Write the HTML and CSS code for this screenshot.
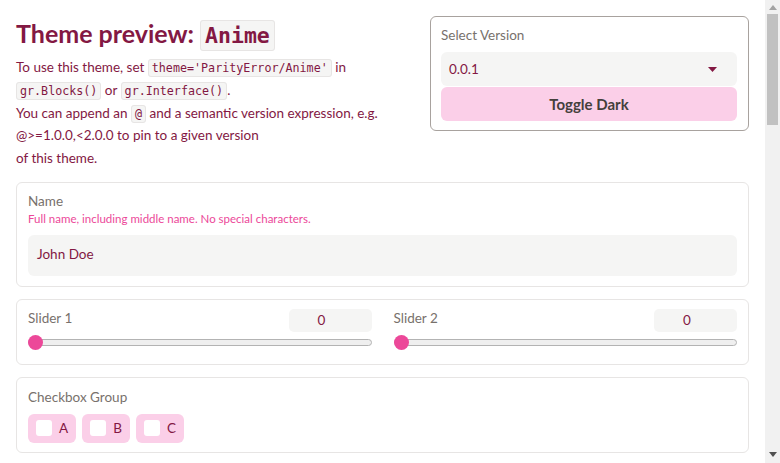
FILE: index.html
```html
<!DOCTYPE html>
<html lang="en">
<head>
<meta charset="utf-8">
<title>Theme preview: Anime</title>
<link rel="stylesheet" href="styles.css">
</head>
<body>
<div class="viewport">
<div class="app">
  <div class="top-row">
    <div class="intro">
      <h1 class="title">Theme preview: <code class="title-code">Anime</code></h1>
      <p class="desc">To use this theme, set <code class="ic">theme='ParityError/Anime'</code> in<br><code class="ic">gr.Blocks()</code> or <code class="ic">gr.Interface()</code>.<br>You can append an <code class="ic">@</code> and a semantic version expression, e.g.<br>@&gt;=1.0.0,&lt;2.0.0 to pin to a given version<br>of this theme.</p>
    </div>
    <div class="version-box">
      <div class="label">Select Version</div>
      <div class="dropdown">
        <span class="dd-value">0.0.1</span>
        <svg class="dd-arrow" width="9" height="5" viewBox="0 0 9 5"><path d="M0 0H9L4.5 5Z" fill="#831843"/></svg>
      </div>
      <button class="toggle">Toggle Dark</button>
    </div>
  </div>

  <div class="block name-block">
    <div class="label">Name</div>
    <div class="info">Full name, including middle name. No special characters.</div>
    <div class="input">John Doe</div>
  </div>

  <div class="block slider-block">
    <div class="slider">
      <div class="slider-head">
        <span class="label">Slider 1</span>
        <span class="num">0</span>
      </div>
      <div class="track-wrap"><div class="track"></div><div class="thumb"></div></div>
    </div>
    <div class="slider">
      <div class="slider-head">
        <span class="label">Slider 2</span>
        <span class="num">0</span>
      </div>
      <div class="track-wrap"><div class="track"></div><div class="thumb"></div></div>
    </div>
  </div>

  <div class="block check-block">
    <div class="label">Checkbox Group</div>
    <div class="checks">
      <label class="check"><span class="box"></span>A</label>
      <label class="check"><span class="box"></span>B</label>
      <label class="check"><span class="box"></span>C</label>
    </div>
  </div>
</div>
<div class="scrollbar">
  <svg class="sb-up" width="8" height="5" viewBox="0 0 8 5"><path d="M4 0L8 5H0Z" fill="#a3a3a3"/></svg>
  <div class="sb-thumb"></div>
  <svg class="sb-down" width="8" height="5" viewBox="0 0 8 5"><path d="M0 0H8L4 5Z" fill="#505050"/></svg>
</div>
</div>
</body>
</html>
```

FILE: styles.css
```css
html, body {
  margin: 0;
  padding: 0;
  background: #ffffff;
  overflow: hidden;
}
body {
  font-family: "Lato", "Liberation Sans", sans-serif;
  color: #831843;
}
.viewport {
  position: relative;
  width: 780px;
  height: 463px;
  overflow: hidden;
}
.app {
  width: 765px;
  box-sizing: border-box;
  padding: 16px;
  display: flex;
  flex-direction: column;
  gap: 12px;
}
.top-row {
  display: flex;
  gap: 16px;
  align-items: flex-start;
}
.intro {
  flex: 1;
  min-width: 0;
}
.title {
  margin: 0;
  font-size: 25px;
  line-height: 35px;
  font-weight: 700;
  color: #831843;
  white-space: nowrap;
}
.title-code {
  font-family: "DejaVu Sans Mono", monospace;
  font-size: 21.5px;
  line-height: 1;
  font-weight: 700;
  background: #f5f5f4;
  border: 1px solid #e7e5e4;
  border-radius: 3px;
  padding: 2px 4px;
}
.desc {
  margin: 5px 0 0 0;
  font-size: 13.5px;
  line-height: 22.75px;
  white-space: nowrap;
}
.ic {
  font-family: "DejaVu Sans Mono", monospace;
  font-size: 11.7px;
  line-height: 1;
  background: #f5f5f4;
  border: 1px solid #e7e5e4;
  border-radius: 3px;
  padding: 1px 3px;
}
.version-box {
  width: 319px;
  box-sizing: border-box;
  border: 1px solid #a8a29e;
  border-radius: 6px;
  padding: 8px 11px 9px 10px;
  display: flex;
  flex-direction: column;
  gap: 1px;
}
.label {
  font-size: 13.5px;
  line-height: 20px;
  color: #78716c;
}
.version-box .label {
  margin-bottom: 6px;
}
.dropdown {
  height: 34px;
  background: #f5f5f4;
  border-radius: 6px;
  display: flex;
  align-items: center;
  justify-content: space-between;
  padding: 0 20px 0 8px;
  font-size: 13.5px;
}
.toggle {
  height: 34px;
  border: none;
  border-radius: 6px;
  background: #fbcfe8;
  color: #44403c;
  font-family: "Lato", "Liberation Sans", sans-serif;
  font-weight: 700;
  font-size: 15px;
  padding: 0;
}
.block {
  border: 1px solid #e7e5e4;
  border-radius: 6px;
  background: #ffffff;
}
.name-block {
  padding: 9px 11px 10px 11px;
}
.name-block .label {
  line-height: 18px;
}
.info {
  font-size: 11.5px;
  line-height: 18px;
  color: #ec4899;
  margin-bottom: 7px;
}
.input {
  height: 41px;
  background: #f5f5f4;
  border-radius: 6px;
  padding: 0 9px 2px 9px;
  box-sizing: border-box;
  display: flex;
  align-items: center;
  font-size: 13.5px;
}
.slider-block {
  display: grid;
  grid-template-columns: 1fr 1fr;
}
.slider {
  padding: 9px 11px 14px 11px;
}
.slider-head {
  display: flex;
  justify-content: space-between;
  align-items: flex-start;
}
.slider-head .label {
  margin-top: -1px;
}
.num {
  width: 83px;
  height: 23px;
  box-sizing: border-box;
  padding-right: 17px;
  background: #f5f5f4;
  border-radius: 5px;
  font-size: 13.5px;
  display: flex;
  align-items: center;
  justify-content: center;
}
.track-wrap {
  position: relative;
  height: 15px;
  margin-top: 3px;
  display: flex;
  align-items: center;
}
.track {
  flex: 1;
  height: 7px;
  box-sizing: border-box;
  background: #efefef;
  border: 1px solid #b3b3b3;
  border-radius: 4px;
}
.thumb {
  position: absolute;
  left: 0;
  top: 0;
  width: 15px;
  height: 15px;
  border-radius: 50%;
  background: #ec4899;
}
.check-block {
  padding: 10px 11px 9px 11px;
}
.check-block .label {
  line-height: 18px;
  margin-bottom: 8px;
}
.checks {
  display: flex;
  gap: 6px;
}
.check {
  height: 29px;
  box-sizing: border-box;
  background: #fbcfe8;
  border-radius: 6px;
  display: flex;
  align-items: center;
  gap: 7px;
  padding: 0 8px 0 8px;
  font-size: 13.5px;
  color: #831843;
}
.box {
  width: 16px;
  height: 16px;
  background: #ffffff;
  border-radius: 3px;
}
.scrollbar {
  position: absolute;
  top: 0;
  right: 0;
  width: 15px;
  height: 463px;
  background: #f1f1f1;
  display: flex;
  flex-direction: column;
  align-items: center;
}
.sb-up {
  margin-top: 5px;
}
.sb-thumb {
  margin-top: 4px;
  width: 11px;
  height: 111px;
  background: #c1c1c1;
}
.sb-down {
  margin-top: auto;
  margin-bottom: 6px;
}
```
